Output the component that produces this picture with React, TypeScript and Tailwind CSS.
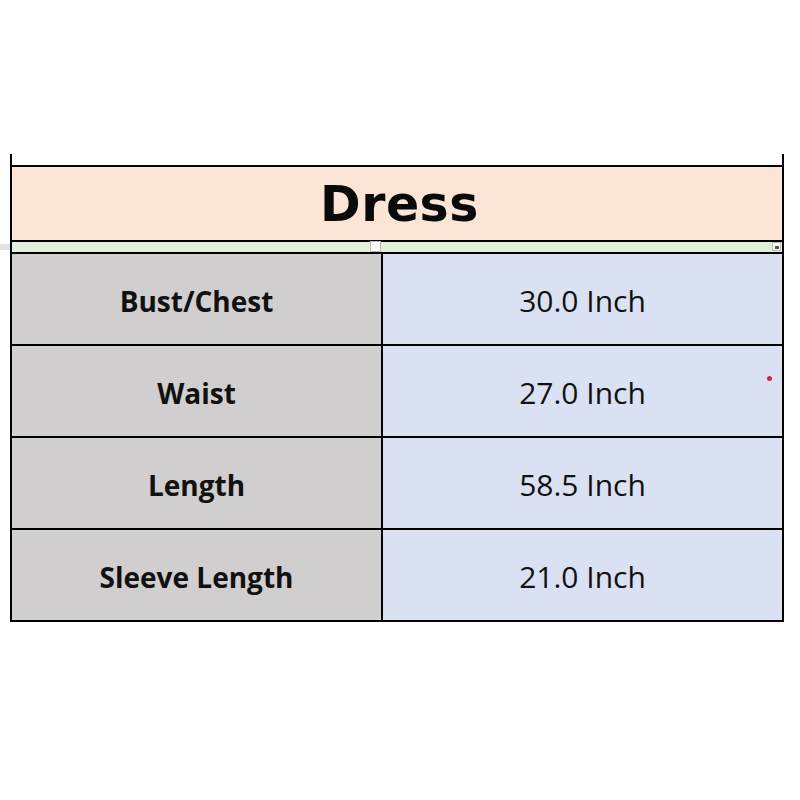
const ROWS = [
  { label: 'Bust/Chest', value: '30.0 Inch' },
  { label: 'Waist', value: '27.0 Inch' },
  { label: 'Length', value: '58.5 Inch' },
  { label: 'Sleeve Length', value: '21.0 Inch' },
]

export default function App() {
  return (
    <div className="w-[800px] h-[800px] bg-white pt-[154px] pl-[10px]">
      {/* Size table */}
      <div className="w-[774px] border-x-2 border-black">
        <div className="h-[11px] bg-white" />

        {/* Header */}
        <div className="h-[77px] border-y-2 border-black bg-[#FCE4D6] flex items-center justify-center">
          <span className="text-[49px] font-bold text-[#0a0a0a] leading-none pt-[1px] pl-[5px] tracking-[0.5px] font-['DejaVu_Sans',sans-serif]">
            Dress
          </span>
        </div>

        {/* Green spacer row with selection handles */}
        <div className="relative h-[10px] bg-[#E2EFDA]">
          <div className="absolute left-[-12px] top-[2px] w-[10px] h-[6px] bg-[#e4e4e4]" />
          <div className="absolute left-[358px] top-[-1px] w-[11px] h-[11px] bg-white border border-[#b8b8b8]" />
          <div className="absolute right-[1px] top-[0px] w-[9px] h-[9px] bg-white border border-[#b8b8b8] flex items-end justify-center">
            <div className="w-[4px] h-[3px] bg-[#555] mb-[1px]" />
          </div>
        </div>

        {ROWS.map((row, i) => (
          <div key={row.label} className="grid grid-cols-[371px_1fr] border-t-2 border-black h-[92px]">
            <div className="bg-[#D0CECE] border-r-2 border-black flex items-center justify-center pt-[3px]">
              <span className="text-[28px] font-bold text-[#111] font-['Open_Sans',sans-serif]">{row.label}</span>
            </div>
            <div className="relative bg-[#D9E1F2] flex items-center justify-center pt-[3px]">
              <span className="text-[30px] text-[#111] font-['Open_Sans',sans-serif]">{row.value}</span>
              {i === 1 && (
                <div className="absolute left-[384px] top-[30px] w-[5px] h-[5px] rounded-full bg-[#d0263a]" />
              )}
            </div>
          </div>
        ))}
        <div className="h-[2px] bg-black" />
      </div>
    </div>
  )
}
